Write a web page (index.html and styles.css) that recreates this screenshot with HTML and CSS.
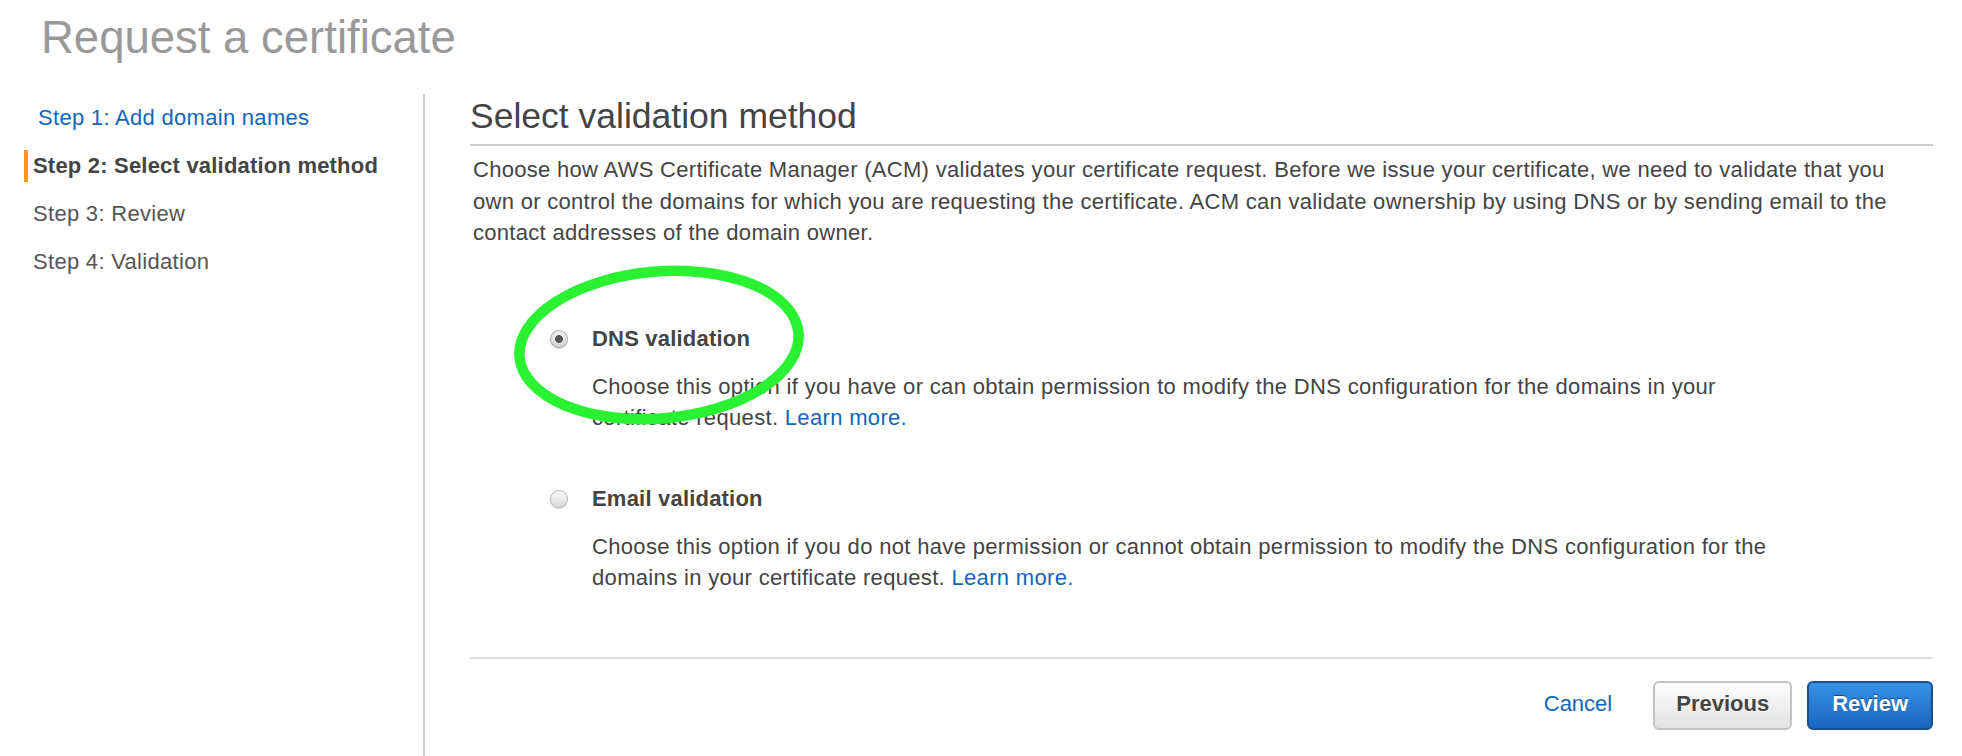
FILE: index.html
```html
<!DOCTYPE html>
<html lang="en">
<head>
<meta charset="utf-8">
<title>Request a certificate</title>
<link rel="stylesheet" href="styles.css">
</head>
<body>
<div class="page">
  <h1 class="title">Request a certificate</h1>
  <div class="wizard">
    <nav class="steps">
      <a class="step step-link" href="#">Step 1: Add domain names</a>
      <div class="step step-active">Step 2: Select validation method</div>
      <div class="step">Step 3: Review</div>
      <div class="step">Step 4: Validation</div>
    </nav>
    <main class="content">
      <h2 class="section-title">Select validation method</h2>
      <p class="intro">Choose how AWS Certificate Manager (ACM) validates your certificate request. Before we issue your certificate, we need to validate that you<br>own or control the domains for which you are requesting the certificate. ACM can validate ownership by using DNS or by sending email to the<br>contact addresses of the domain owner.</p>
      <div class="options">
        <div class="option">
          <span class="radio radio-checked"></span>
          <div class="option-body">
            <div class="option-label">DNS validation</div>
            <p class="option-desc">Choose this option if you have or can obtain permission to modify the DNS configuration for the domains in your<br>certificate request. <a class="link" href="#">Learn more.</a></p>
          </div>
        </div>
        <div class="option">
          <span class="radio"></span>
          <div class="option-body">
            <div class="option-label">Email validation</div>
            <p class="option-desc">Choose this option if you do not have permission or cannot obtain permission to modify the DNS configuration for the<br>domains in your certificate request. <a class="link" href="#">Learn more.</a></p>
          </div>
        </div>
      </div>
      <div class="footer">
        <a class="cancel" href="#">Cancel</a>
        <button class="btn btn-secondary" type="button">Previous</button>
        <button class="btn btn-primary" type="button">Review</button>
      </div>
    </main>
  </div>
  <svg class="annotation" width="310" height="180" viewBox="0 0 310 180">
    <ellipse cx="155" cy="89" rx="140" ry="73.5" fill="none" stroke="#2af233" stroke-width="10.5" transform="rotate(-5 155 89)"/>
  </svg>
</div>
</body>
</html>
```

FILE: styles.css
```css
* {
  box-sizing: border-box;
}

html, body {
  margin: 0;
  padding: 0;
  background: #fff;
}

body {
  font-family: "Liberation Sans", Arial, sans-serif;
  color: #444;
}

.page {
  position: relative;
  min-height: 756px;
  display: flex;
  flex-direction: column;
}

.title {
  margin: 0 0 29px 0;
  padding: 11px 0 0 41px;
  font-size: 45.5px;
  line-height: 54px;
  font-weight: normal;
  color: #999;
}

.wizard {
  flex: 1;
  display: flex;
}

.steps {
  width: 425px;
  flex: none;
  border-right: 2px solid #cccccc;
  padding: 8px 0 0 24px;
  display: flex;
  flex-direction: column;
  gap: 16px;
}

.step {
  display: block;
  height: 32px;
  line-height: 32px;
  font-size: 22px;
  letter-spacing: 0.3px;
  padding-left: 9px;
  color: #555;
  text-decoration: none;
  white-space: nowrap;
}

.step-link {
  color: #1166bb;
  padding-left: 14px;
}

.step-active {
  border-left: 4px solid #f7981d;
  padding-left: 5px;
  font-weight: bold;
  letter-spacing: 0.2px;
  color: #444;
}

.content {
  flex: 1;
  padding: 0 29px 0 45px;
}

.section-title {
  margin: 2px 0 0 0;
  padding: 0 0 8px 0;
  font-size: 35.5px;
  line-height: 40px;
  font-weight: normal;
  color: #444;
  border-bottom: 2px solid #cccccc;
}

.intro {
  margin: 8px 0 0 0;
  padding-left: 3px;
  font-size: 22px;
  line-height: 31.5px;
  letter-spacing: 0.3px;
  white-space: nowrap;
  color: #444;
}

.options {
  margin-top: 74px;
  padding-left: 80px;
  display: flex;
  flex-direction: column;
  gap: 49px;
}

.option {
  display: flex;
  align-items: flex-start;
}

.radio {
  flex: none;
  width: 18px;
  height: 18px;
  margin: 7px 24px 0 0;
  border-radius: 50%;
  border: 1px solid #b9b9b9;
  background: linear-gradient(#fbfbfb, #dadada);
  box-shadow: 0 1px 1px rgba(0, 0, 0, 0.18);
}

.radio-checked {
  border-color: #a9a9a9;
  background:
    radial-gradient(circle, #555 0, #555 3.5px, rgba(85, 85, 85, 0) 4.3px),
    linear-gradient(#f2f2f2, #d2d2d2);
}

.option-body {
  flex: 1;
}

.option-label {
  font-size: 22px;
  line-height: 32px;
  font-weight: bold;
  letter-spacing: 0.2px;
  color: #444;
}

.option-desc {
  margin: 16px 0 0 0;
  font-size: 22px;
  line-height: 31.5px;
  letter-spacing: 0.33px;
  white-space: nowrap;
  color: #444;
}

.link {
  color: #1166bb;
  text-decoration: none;
}

.footer {
  margin-top: 63px;
  border-top: 2px solid #dddddd;
  padding-top: 22px;
  display: flex;
  justify-content: flex-end;
  align-items: center;
}

.cancel {
  font-size: 22px;
  line-height: 32px;
  padding-bottom: 3px;
  color: #1166bb;
  text-decoration: none;
  margin-right: 41px;
}

.btn {
  height: 49px;
  padding: 0 21px 3px 21px;
  border-radius: 6px;
  font-family: "Liberation Sans", Arial, sans-serif;
  font-size: 22px;
  font-weight: bold;
  line-height: 42px;
  cursor: pointer;
}

.btn-secondary {
  border: 2px solid #c3c3c3;
  background: linear-gradient(#fdfdfd, #e2e2e2);
  color: #444;
  text-shadow: 0 1px 0 #fff;
}

.btn-primary {
  margin-left: 15px;
  padding: 0 23px 3px 23px;
  border: 2px solid #1a4f8c;
  background: linear-gradient(#3592e6, #1a66bf);
  color: #fff;
  text-shadow: 0 -1px 1px rgba(0, 0, 0, 0.45);
}

.annotation {
  position: absolute;
  left: 504px;
  top: 256px;
  overflow: visible;
  pointer-events: none;
}
```
